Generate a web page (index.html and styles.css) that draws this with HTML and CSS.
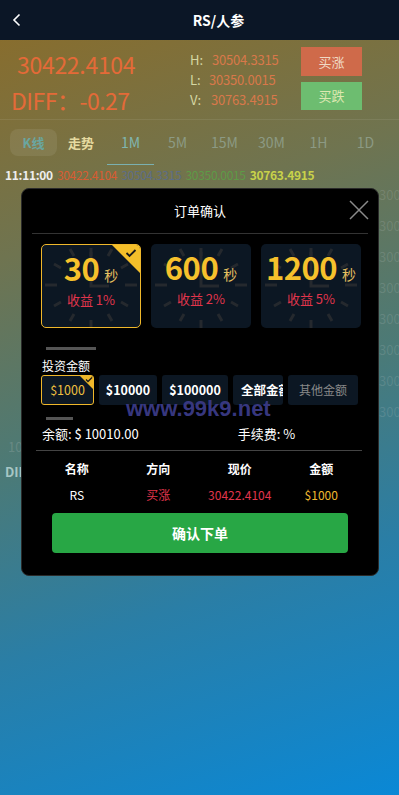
FILE: index.html
```html
<!DOCTYPE html>
<html lang="zh">
<head>
<meta charset="utf-8">
<link rel="stylesheet" href="styles.css">
</head>
<body>
<div class="page">
  <header class="topbar">
    <svg class="back" width="10" height="14" viewBox="0 0 10 14"><path d="M7.5 1.5 L2 7 L7.5 12.5" fill="none" stroke="#fff" stroke-width="1.6"/></svg>
    <div class="title">RS/人参</div>
  </header>

  <section class="info">
    <div class="prices">
      <div class="big">30422.4104</div>
      <div class="big diff">DIFF：-0.27</div>
    </div>
    <div class="hlv">
      <div class="hrow"><span class="lbl">H:</span><span class="val">30504.3315</span></div>
      <div class="hrow"><span class="lbl">L:</span><span class="val">30350.0015</span></div>
      <div class="hrow"><span class="lbl">V:</span><span class="val">30763.4915</span></div>
    </div>
    <div class="btns">
      <div class="bbtn up">买涨</div>
      <div class="bbtn down">买跌</div>
    </div>
  </section>

  <nav class="tabs">
    <div class="pill">K线</div>
    <div class="trend">走势</div>
    <div class="tf active">1M</div>
    <div class="tf">5M</div>
    <div class="tf">15M</div>
    <div class="tf">30M</div>
    <div class="tf">1H</div>
    <div class="tf">1D</div>
  </nav>

  <div class="ticker">
    <span class="t-time">11:11:00</span>
    <span class="t-o">30422.4104</span>
    <span class="t-h">30504.3315</span>
    <span class="t-l">30350.0015</span>
    <span class="t-c">30763.4915</span>
  </div>

  <div class="chart">
    <div class="axis">
      <span>30000</span><span>30000</span><span>30000</span><span>30000</span><span>30000</span><span>30000</span><span>30000</span><span>30000</span>
    </div>
    <div class="leftlbl ten">10</div>
    <div class="leftlbl dii">DIFF</div>
  </div>

  <div class="modal">
    <div class="m-head">
      <div class="m-title">订单确认</div>
      <svg class="close" width="20" height="20" viewBox="0 0 20 20"><path d="M1 1 L19 19 M19 1 L1 19" stroke="#8a8a8a" stroke-width="1.5"/></svg>
    </div>

    <div class="cards">
      <div class="card sel">
        <svg class="clock" width="100" height="84" viewBox="0 0 100 84"><use href="#clk"/></svg>
        <div class="num"><b>30</b><span>秒</span></div>
        <div class="profit">收益 1%</div>
        <div class="corner"><svg width="12" height="10" viewBox="0 0 12 10"><path d="M1.5 5 L4.5 8 L10.5 2" fill="none" stroke="#1a1a1a" stroke-width="1.8"/></svg></div>
      </div>
      <div class="card">
        <svg class="clock" width="100" height="84" viewBox="0 0 100 84"><use href="#clk"/></svg>
        <div class="num"><b>600</b><span>秒</span></div>
        <div class="profit">收益 2%</div>
      </div>
      <div class="card">
        <svg class="clock" width="100" height="84" viewBox="0 0 100 84"><use href="#clk"/></svg>
        <div class="num"><b>1200</b><span>秒</span></div>
        <div class="profit">收益 5%</div>
      </div>
    </div>

    <div class="bar long"></div>
    <div class="label">投资金额</div>
    <div class="amounts">
      <div class="amt sel">$1000<div class="mini"><svg width="8" height="7" viewBox="0 0 8 7"><path d="M1 3.5 L3 5.5 L7 1.5" fill="none" stroke="#1a1a1a" stroke-width="1.3"/></svg></div></div>
      <div class="amt">$10000</div>
      <div class="amt">$100000</div>
      <div class="amt clip"><span>全部金額</span></div>
      <div class="amt other">其他金额</div>
    </div>
    <div class="bar short"></div>
    <div class="balance">
      <span>余额: $ 10010.00</span>
      <span class="fee">手续费:&nbsp;%</span>
    </div>
    <div class="divider"></div>
    <div class="table">
      <div class="th">名称</div><div class="th">方向</div><div class="th">现价</div><div class="th">金额</div>
      <div class="td">RS</div><div class="td red">买涨</div><div class="td red">30422.4104</div><div class="td gold">$1000</div>
    </div>
    <div class="confirm">确认下单</div>
    <div class="watermark">www.99k9.net</div>
  </div>

  <svg width="0" height="0" class="defs">
    <defs>
      <g id="clk" stroke="#25292e" stroke-width="3" fill="none">
        <path d="M50 4 V12 M50 76 V84 M4 41 H16 M84 41 H96"/>
        <path d="M71 5 L67 12 M29 5 L33 12 M71 77 L67 70 M29 77 L33 70 M13 20 L20 24 M87 20 L80 24 M13 62 L20 58 M87 62 L80 58"/>
        <path d="M50 8 V42 H68" stroke-width="3"/>
      </g>
    </defs>
  </svg>
</div>
</body>
</html>
```

FILE: styles.css
```css
* { box-sizing: border-box; }
html, body { margin: 0; padding: 0; }
body {
  width: 399px;
  height: 795px;
  overflow: hidden;
  font-family: "Noto Sans CJK SC", "Noto Sans", sans-serif;
  color: #fff;
}
.page {
  position: relative;
  width: 399px;
  height: 795px;
  overflow: hidden;
  background: linear-gradient(162deg, #8c6c28 0%, #6f7450 28%, #4a7a78 52%, #2a7ea6 72%, #0a88d6 100%);
}
.defs { position: absolute; }

.topbar {
  height: 40px;
  background: #0b1626;
  display: flex;
  align-items: center;
  position: relative;
}
.back { margin-left: 12px; }
.title {
  flex: 1;
  text-align: center;
  margin-left: 16px;
  font-weight: 700;
  font-size: 14px;
}

.info {
  height: 80px;
  display: flex;
  padding: 7px 0 0 0;
  border-bottom: 1px solid rgba(255,255,255,0.08);
}
.prices { width: 190px; padding-left: 11px; }
.big {
  font-size: 23px;
  color: #e46a38;
  line-height: 34px;
  height: 34px;
  padding-left: 6px;
  letter-spacing: -0.3px;
  white-space: nowrap;
}
.big.diff { padding-left: 0; margin-top: 2px; letter-spacing: -0.5px; }
.hlv { width: 111px; padding-top: 3px; }
.hrow { height: 20px; line-height: 20px; font-size: 13px; }
.lbl { color: #d6d8a4; display: inline-block; width: 22px; }
.hrow:nth-child(2) .lbl { width: 19px; }
.hrow:nth-child(3) .lbl { width: 21px; }
.val { color: #d8784a; letter-spacing: -0.2px; }
.btns { display: flex; flex-direction: column; gap: 6px; }
.bbtn {
  width: 61px;
  height: 29px;
  line-height: 29px;
  text-align: center;
  font-size: 13px;
  color: #efd9c4;
}
.bbtn.up { background: #cf6a4a; }
.bbtn.down { background: #6dbd70; color: #dde8b0; height: 28px; line-height: 28px; }

.tabs {
  height: 45px;
  display: flex;
  align-items: center;
  padding-left: 10px;
}
.pill {
  width: 47px; height: 27px; line-height: 27px;
  text-align: center;
  background: rgba(255,255,255,0.08);
  border-radius: 8px;
  color: #6aa6a0;
  font-weight: 700;
  font-size: 13px;
}
.trend { margin-left: 11px; width: 37px; color: #e6dba0; font-weight: 700; font-size: 13px; }
.tf {
  width: 47px;
  text-align: center;
  color: #8c9a84;
  font-size: 14px;
  height: 45px;
  line-height: 44px;
}
.tf.active { color: #80b6b0; border-bottom: 1px solid #7ab0b0; margin-left: 2px; }

.ticker {
  height: 20px;
  line-height: 20px;
  padding-left: 5px;
  font-size: 12px;
  display: flex;
  gap: 4px;
  white-space: nowrap;
  letter-spacing: -0.3px;
}
.t-time { color: #eee; font-weight: 700; }
.t-o { color: #d85c32; }
.t-h { color: #5c6d86; }
.t-l { color: #5e9a46; }
.t-c { color: #c8d24a; font-weight: 700; }

.chart { position: relative; height: 300px; overflow: hidden; }
.axis {
  position: absolute; left: 379px; top: 0;
  display: flex; flex-direction: column; gap: 12px;
  font-size: 13px; color: rgba(210,210,210,0.16);
}
.leftlbl { position: absolute; font-size: 13px; }
.leftlbl.ten { top: 252px; color: rgba(210,210,210,0.2); left: 8px; }
.leftlbl.dii { top: 277px; color: #a7c6c4; font-weight: 700; left: 5px; }

.modal {
  position: absolute;
  left: 21px; top: 188px;
  width: 358px; height: 388px;
  background: #000;
  border: 1px solid #2a2a2a;
  border-radius: 8px;
  display: flex;
  flex-direction: column;
  padding: 0 14px;
}
.m-head {
  height: 45px;
  display: flex;
  align-items: center;
  justify-content: center;
  border-bottom: 1px solid #333;
  margin: 0 -4px;
  position: relative;
}
.m-title { font-size: 13px; color: #fff; margin-top: -2px; }
.close { position: absolute; right: -1px; top: 11px; }

.cards { display: flex; gap: 10px; margin-top: 10px; padding-left: 5px; }
.card {
  position: relative;
  width: 100px; height: 84px;
  background: #0c1723;
  border-radius: 5px;
  overflow: hidden;
  display: flex; flex-direction: column; align-items: center;
}
.card.sel { border: 1px solid #efb72a; }
.clock { position: absolute; left: 0; top: 0; }
.card.sel .clock { left: -1px; top: -1px; }
.num { position: relative; margin-top: 5px; height: 36px; display: flex; align-items: baseline; gap: 5px; }
.num b { font-size: 31px; color: #f6c12c; font-weight: 700; line-height: 36px; letter-spacing: -0.5px; }
.num span { font-size: 14px; color: #e6c060; }
.profit { position: relative; margin-top: 4px; font-size: 13px; color: #e0354c; }
.corner {
  position: absolute; right: 0; top: 0;
  width: 0; height: 0;
  border-top: 28px solid #f4bf2a;
  border-left: 28px solid transparent;
}
.corner svg { position: absolute; top: -25px; right: 3px; }

.bar { height: 3px; background: #555; }
.bar.long { width: 50px; margin: 19px 0 0 10px; }
.bar.short { width: 27px; margin: 12px 0 0 10px; }
.label { font-size: 12px; margin: 8px 0 0 6px; line-height: 16px; }
.amounts { display: flex; gap: 5px; margin-top: 1px; padding-left: 5px; }
.amt {
  position: relative;
  height: 30px; line-height: 30px;
  background: #0c1723;
  border-radius: 3px;
  font-size: 12.5px; font-weight: 700;
  text-align: center;
  white-space: nowrap;
}
.amt.sel { width: 53px; border: 1px solid #efb72a; color: #f0c040; font-weight: 400; line-height: 28px; overflow: hidden; }
.amt:nth-child(2) { width: 58px; }
.amt:nth-child(3) { width: 66px; }
.amt.clip { width: 50px; padding-left: 8px; overflow: hidden; text-align: left; }
.amt.other { width: 70px; color: #888; font-weight: 400; font-size: 12px; }
.mini {
  position: absolute; right: 0; top: 0;
  width: 0; height: 0;
  border-top: 13px solid #efb72a;
  border-left: 13px solid transparent;
}
.mini svg { position: absolute; top: -13px; right: 0; }

.balance {
  display: flex;
  margin: 5px 0 0 6px;
  font-size: 13px;
  line-height: 18px;
}
.fee { margin-left: 99px; }
.divider { height: 1px; background: #444; margin: 7px 2px 0 0; }

.table {
  display: grid;
  grid-template-columns: repeat(4, 1fr);
  margin: 9px 2px 0 0;
  row-gap: 8px;
}
.th { text-align: center; font-size: 12px; font-weight: 700; line-height: 18px; }
.td { text-align: center; font-size: 12px; line-height: 18px; }
.td.red { color: #e0354c; }
.td.gold { color: #f0b830; }

.confirm {
  margin: 9px 16px 0;
  height: 40px; line-height: 40px;
  background: #28a745;
  border-radius: 4px;
  text-align: center;
  font-size: 14px; font-weight: 700;
}
.watermark {
  position: absolute;
  left: 104px; top: 207px;
  font-family: "Liberation Sans", Arial, sans-serif;
  font-weight: 700;
  font-size: 22px;
  line-height: 26px;
  color: #37377f;
}
```
